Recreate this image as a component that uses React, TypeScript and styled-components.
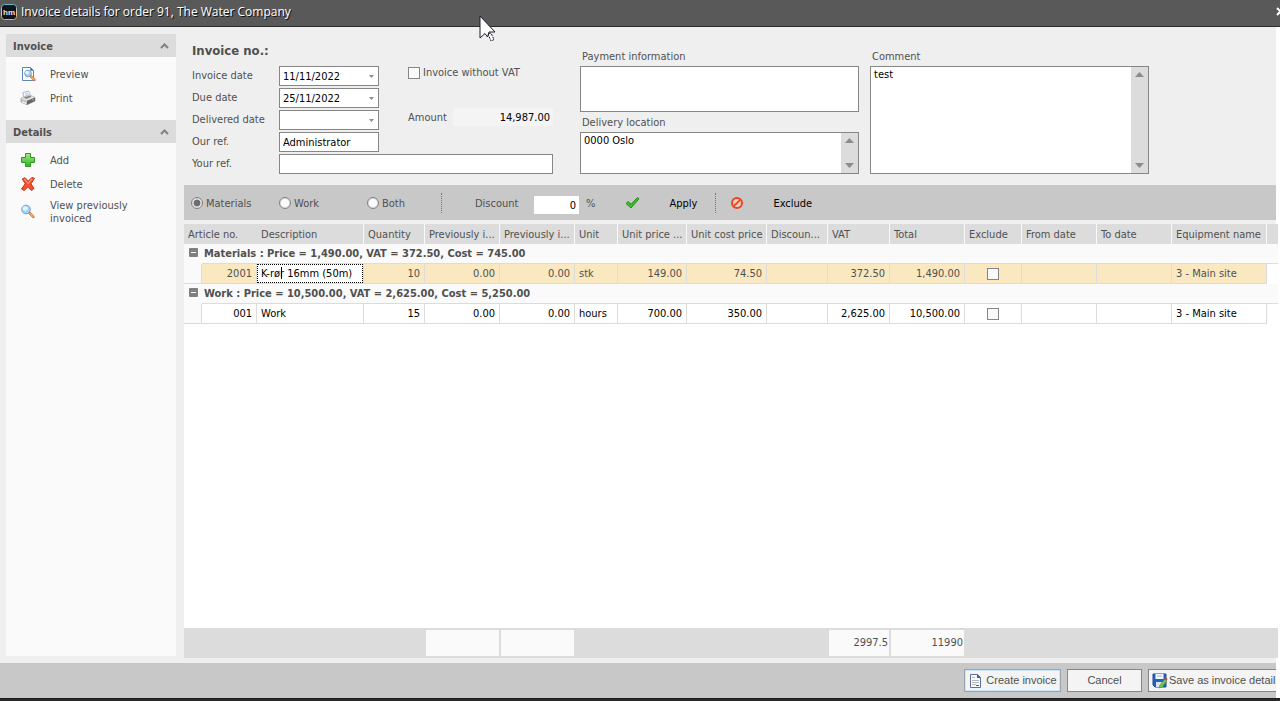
import React from "react";
import styled, { createGlobalStyle, css } from "styled-components";

const colors = {
  window: "#efefef",
  panel: "#fafafa",
  header: "#dcdcdc",
  bar: "#c8c8c8",
  line: "#dcdcdc",
  border: "#868686",
  text: "#505050",
  selected: "#fae8c0",
};

const GlobalStyle = createGlobalStyle`
  *, *::before, *::after { box-sizing: border-box; }
  body { margin: 0; background: #fff; }
  body, button, input, textarea, table {
    font-family: "DejaVu Sans Condensed", Tahoma, "Noto Sans", sans-serif;
    font-size: 11px;
    line-height: 13px;
    color: ${colors.text};
  }
  button { padding: 0; border: 0; background: none; cursor: pointer; }
  svg { display: block; flex: none; }
`;

const Window = styled.div`
  position: relative;
  display: flex;
  flex-direction: column;
  min-height: 100vh;
  overflow: hidden;
`;

const TitleBar = styled.header`
  display: flex;
  align-items: center;
  gap: 4px;
  height: 27px;
  padding: 0 0 2px 1px;
  background: #595959;
  border-bottom: 1px solid #2c2c2c;
`;

const Title = styled.h1`
  flex: 1;
  margin: 0;
  font-family: "Open Sans", "Noto Sans", sans-serif;
  font-size: 12px;
  line-height: 16px;
  font-weight: 400;
  color: #fff;
  text-shadow: 1px 1px 0 #111;
`;

const CloseButton = styled.button`
  width: 4px;
  height: 12px;
  overflow: hidden;
`;

const Workspace = styled.div`
  flex: 1;
  display: flex;
  gap: 8px;
  margin-right: 4px;
  padding-left: 6px;
  background: ${colors.window};
`;

const Sidebar = styled.aside`
  flex: none;
  width: 170px;
  margin: 7px 0;
  background: ${colors.panel};
`;

const SectionHeader = styled.button`
  display: flex;
  align-items: center;
  justify-content: space-between;
  width: 100%;
  height: 23px;
  padding: 1px 7px 0;
  background: ${colors.header};
  font-weight: 700;
`;

const SectionBody = styled.nav`
  padding: 5px 0 10px;
`;

const SideAction = styled.button`
  display: flex;
  align-items: center;
  gap: 14px;
  width: 100%;
  min-height: 24px;
  padding: 3px 40px 3px 14px;
  text-align: left;
`;

const Main = styled.main`
  flex: 1;
  min-width: 0;
  display: flex;
  flex-direction: column;
  padding-bottom: 5px;
`;

const Form = styled.form`
  display: flex;
  padding: 16px 0 11px 8px;
`;

const GeneralFields = styled.section`
  width: 361px;
  margin-right: 27px;
`;

const FormTitle = styled.h2`
  margin: 0 0 8px;
  font-size: 13px;
  line-height: 15px;
  font-weight: 700;
`;

const FieldGrid = styled.div`
  display: grid;
  grid-template-columns: 87px 100px 1fr;
  grid-auto-rows: 20px;
  row-gap: 2px;
`;

const FieldLabel = styled.label`
  grid-column: 1;
  line-height: 20px;
`;

const FieldBox = styled.div<{ $wide?: boolean }>`
  grid-column: ${(p) => (p.$wide ? "2 / 4" : "2")};
  display: flex;
  border: 1px solid ${colors.border};
  background: #fff;
`;

const FieldInput = styled.input`
  flex: 1;
  min-width: 0;
  padding: 0 3px;
  border: 0;
  outline: 0;
  background: transparent;
  color: #000;
`;

const DropButton = styled.button`
  display: grid;
  place-items: center;
  width: 14px;
`;

const Options = styled.div`
  grid-column: 3;
  grid-row: 1 / 5;
  display: flex;
  flex-direction: column;
  gap: 29px;
  padding-left: 29px;
`;

const CheckLabel = styled.label`
  display: flex;
  align-items: center;
  gap: 3px;
  white-space: nowrap;
`;

const CheckBox = styled.input`
  appearance: none;
  display: block;
  width: 12px;
  height: 12px;
  margin: 0;
  border: 1px solid ${colors.border};
  background: ${colors.panel};
  &:checked { background: ${colors.border}; }
`;

const AmountRow = styled.div`
  display: flex;
  align-items: center;
`;

const AmountLabel = styled.label`
  width: 45px;
`;

const Amount = styled.output`
  flex: 1;
  padding: 3px 3px 2px;
  background: #f4f4f4;
  color: #000;
  text-align: right;
`;

const NotesColumn = styled.section`
  width: 279px;
  margin-right: 11px;
  padding-top: 6px;
`;

const NoteLabel = styled.label`
  display: block;
  margin-bottom: 2px;
  padding-left: 2px;
  line-height: 15px;
`;

const NoteBox = styled.div<{ $height: number }>`
  display: flex;
  height: ${(p) => p.$height}px;
  border: 1px solid ${colors.border};
  background: #fff;
  & + label { margin-top: 3px; }
`;

const NoteText = styled.textarea`
  flex: 1;
  min-width: 0;
  padding: 1px 3px;
  border: 0;
  outline: 0;
  resize: none;
  overflow: hidden;
  color: #000;
`;

const ScrollBar = styled.div`
  display: flex;
  flex-direction: column;
  justify-content: space-between;
  align-items: center;
  width: 17px;
  padding: 5px 0;
  background: ${colors.header};
`;

const ToolBar = styled.div`
  display: flex;
  align-items: center;
  height: 35px;
  margin-bottom: 4px;
  padding: 1px 0 0 7px;
  background: ${colors.bar};
`;

const RadioGroup = styled.div`
  display: grid;
  grid-template-columns: 88px 88px 74px;
`;

const RadioLabel = styled.label`
  display: flex;
  align-items: center;
  gap: 3px;
`;

const Radio = styled.input`
  appearance: none;
  display: block;
  width: 12px;
  height: 12px;
  margin: 0;
  border: 1px solid #808080;
  border-radius: 50%;
  background: ${colors.panel};
  box-shadow: inset 0 0 0 1px #d8d8d8;
  &:checked { background: radial-gradient(circle, #6e6e6e 3px, #fafafa 4px); }
`;

const Separator = styled.div`
  height: 20px;
  border-left: 1px dotted #777;
`;

const DiscountLabel = styled.label`
  width: 59px;
  margin-left: 33px;
`;

const DiscountInput = styled.input`
  width: 45px;
  height: 18px;
  margin: 3px 7px 0 0;
  padding: 1px 3px 0;
  border: 0;
  background: #fff;
  color: #000;
  text-align: right;
`;

const ToolButton = styled.button`
  display: flex;
  align-items: center;
  gap: 29px;
  color: #000;
`;

const ApplyButton = styled(ToolButton)`
  width: 90px;
  margin-left: 30px;
`;

const ExcludeButton = styled(ToolButton)`
  margin-left: 14px;
`;

const Grid = styled.section`
  flex: 1;
  display: flex;
  flex-direction: column;
  justify-content: space-between;
  margin-right: -2px;
  background: #fff;
`;

const Table = styled.table`
  width: 100%;
  table-layout: fixed;
  border-collapse: separate;
  border-spacing: 0;
`;

const Column = styled.col<{ $width?: number }>`
  width: ${(p) => (p.$width ? `${p.$width}px` : "auto")};
`;

const HeadCell = styled.th<{ $joined?: boolean }>`
  height: 20px;
  padding: 0 0 0 4px;
  border-right: 1px solid ${(p) => (p.$joined ? colors.header : colors.panel)};
  background: ${colors.header};
  font-weight: 400;
  text-align: left;
  white-space: nowrap;
  overflow: hidden;
  &:last-child { border-right: 0; }
`;

const GroupToggleCell = styled.td`
  height: 20px;
  padding: 0 0 2px 5px;
  background: ${colors.panel};
`;

const GroupTitle = styled.td`
  height: 20px;
  padding: 0 3px 0 2px;
  border-bottom: 1px solid ${colors.line};
  background: ${colors.panel};
  font-weight: 700;
`;

const Cell = styled.td<{ $align?: string; $filler?: boolean; $flush?: boolean }>`
  height: 20px;
  padding: 0 4px;
  text-align: ${(p) => p.$align || "left"};
  white-space: nowrap;
  overflow: hidden;
  ${(p) => p.$flush && css`padding: 0;`}
  ${(p) =>
    !p.$filler &&
    css`
      border-right: 1px solid ${colors.line};
      border-bottom: 1px solid ${colors.line};
    `}
  & > input[type="checkbox"] { margin: 0 auto; }
`;

const DataRow = styled.tr<{ $selected?: boolean }>`
  color: ${(p) => (p.$selected ? colors.text : "#000")};
  & > td { background: ${(p) => (p.$selected ? colors.selected : "#fff")}; }
  & > td:first-child { background: ${colors.panel}; }
  & > td:last-child { background: #fff; }
`;

const EditorBox = styled.div`
  position: relative;
  display: flex;
  height: 19px;
`;

const CellEditor = styled.input`
  width: 100%;
  padding: 0 3px;
  border: 1px dotted #000;
  border-radius: 0;
  outline: 0;
  background: #fff;
  color: #000;
`;

const Caret = styled.span`
  position: absolute;
  left: 24px;
  top: 3px;
  width: 1px;
  height: 12px;
  background: #000;
`;

const Summary = styled.div`
  display: grid;
  grid-template-columns: 241px 75px 75px 253px 62px 75px;
  height: 30px;
  padding: 2px 0;
  background: ${colors.header};
`;

const SummaryCell = styled.output<{ $column: number }>`
  grid-column: ${(p) => p.$column};
  margin-left: 1px;
  padding-right: 1px;
  border-right: 1px solid ${colors.header};
  background: ${colors.panel};
  line-height: 26px;
  text-align: right;
`;

const Footer = styled.footer`
  display: flex;
  justify-content: flex-end;
  gap: 6px;
  height: 35px;
  margin-right: 4px;
  padding-top: 6px;
  background: ${colors.bar};
  overflow: hidden;
`;

const FooterButton = styled.button<{ $width: number; $primary?: boolean }>`
  flex: none;
  display: flex;
  align-items: center;
  justify-content: center;
  gap: 4px;
  width: ${(p) => p.$width}px;
  height: 23px;
  border: 1px solid ${(p) => (p.$primary ? "#98a4ae" : colors.border)};
  background: #f4f4f4;
  font-family: "Liberation Sans", Arial, sans-serif;
  white-space: nowrap;
  ${(p) => p.$primary && css`box-shadow: inset 0 0 0 1px #c9e6fa;`}
  &:last-child {
    justify-content: flex-start;
    gap: 1px;
    margin-right: -12px;
    padding-left: 3px;
  }
`;

const BottomEdge = styled.div`
  height: 3px;
  background: #2a2828;
  border-top: 1px solid #1c1c1c;
`;

const Pointer = styled.svg`
  position: absolute;
  left: 479px;
  top: 15px;
  pointer-events: none;
`;

const LogoIcon = () => (
  <svg width="16" height="16" viewBox="0 0 16 16">
    <defs>
      <linearGradient id="ring" x1="0" y1="0" x2="0" y2="1">
        <stop offset="0" stopColor="#6fb7bd" />
        <stop offset="0.5" stopColor="#d8c7b0" />
        <stop offset="1" stopColor="#efb13a" />
      </linearGradient>
    </defs>
    <rect x="0.5" y="0.5" width="15" height="15" rx="3" fill="#10131d" stroke="url(#ring)" />
    <text x="8" y="11" textAnchor="middle" fontSize="8" fontWeight="700" fontFamily="Liberation Sans, sans-serif" fill="#e8e8e8">hm</text>
  </svg>
);

const CloseIcon = () => (
  <svg width="10" height="10" viewBox="0 0 10 10">
    <path d="M1 1L8 8M8 1L1 8" stroke="#fff" strokeWidth="2" />
  </svg>
);

const ChevronIcon = () => (
  <svg width="9" height="6" viewBox="0 0 9 6">
    <path d="M1 5L4.500 1.500L8 5" fill="none" stroke="#808080" strokeWidth="2" />
  </svg>
);

const LensShape = ({ x, y, r }: { x: number; y: number; r: number }) => (
  <g>
    <path d={`M${x + r * 0.8} ${y + r * 0.8}L${x + r + 3} ${y + r + 3}`} stroke="#c96a2c" strokeWidth="2.600" strokeLinecap="round" />
    <path d={`M${x + r * 0.9} ${y + r * 0.9}L${x + r + 2.6} ${y + r + 2.6}`} stroke="#f3b06c" strokeWidth="1.400" strokeLinecap="round" />
    <circle cx={x} cy={y} r={r} fill="#9fd6f5" stroke="#7d9cc0" strokeWidth="1" />
    <ellipse cx={x - 0.8} cy={y - 1} rx={r * 0.6} ry={r * 0.5} fill="#e2f5ff" />
  </g>
);

const PreviewIcon = () => (
  <svg width="16" height="16" viewBox="0 0 16 16">
    <path d="M2.500 1.500h8l3 3v10h-11z" fill="#fbfdff" stroke="#5f86bb" />
    <path d="M10.500 1.500v3h3z" fill="#3c64a0" stroke="#5f86bb" strokeWidth="0.600" />
    <LensShape x={8} y={7.5} r={3.3} />
  </svg>
);

const PrintIcon = () => (
  <svg width="16" height="16" viewBox="0 0 16 16">
    <path d="M3.500 7L3 2.500L8.500 1L11 6z" fill="#f4f8ff" stroke="#9aa9bd" strokeWidth="0.800" />
    <path d="M5 4l3-.8M5.300 5.600l3.300-.9" stroke="#a8bcd8" strokeWidth="0.800" />
    <path d="M1 8.200L10 5.200L15 7.400V11L7 14.800L1 12z" fill="#c4c4c4" stroke="#999" strokeWidth="0.700" />
    <path d="M1 8.200L10 5.200L15 7.400L7 10.700z" fill="#e6e6e6" />
    <path d="M3.800 7.600L9.600 5.700L11.800 6.800L6.200 8.900z" fill="#858585" />
    <path d="M7 10.700L15 7.400V11L7 14.800z" fill="#666" />
    <path d="M2 11.200l4 1.900v1L2 12.300z" fill="#fff" />
    <circle cx="13" cy="9.600" r="0.900" fill="#5bd34a" />
  </svg>
);

const AddIcon = () => (
  <svg width="16" height="16" viewBox="0 0 16 16">
    <defs>
      <linearGradient id="plus" x1="0" y1="0" x2="0" y2="1">
        <stop offset="0" stopColor="#a5ec83" />
        <stop offset="1" stopColor="#2fae24" />
      </linearGradient>
    </defs>
    <path d="M5.500 1.500h5V5.500h4v5h-4V14.500h-5v-4H1.500V5.500H5.500z" fill="url(#plus)" stroke="#2e9a26" />
  </svg>
);

const DeleteIcon = () => (
  <svg width="16" height="16" viewBox="0 0 16 16">
    <path d="M2.300 3L5 1.700L8.300 5L12 1.500L14.500 2.300L11 7.800L14 12.500L11.500 14.500L7.800 11L4.200 14.500L1.500 13L5.200 7.800z" fill="#f4512f" stroke="#c3331d" strokeLinejoin="round" />
    <path d="M4.200 3L8.200 7.300L12.300 2.700" fill="none" stroke="#ff9478" strokeWidth="1.200" />
  </svg>
);

const SearchIcon = () => (
  <svg width="16" height="16" viewBox="0 0 16 16">
    <LensShape x={6} y={5.5} r={4.3} />
  </svg>
);

const CheckIcon = () => (
  <svg width="15" height="14" viewBox="0 0 15 14">
    <path d="M1 7.500L3.200 5.500L6 8.200L12.500 1.500L14 2.800L6 12z" fill="#3fba2c" stroke="#23911b" strokeLinejoin="round" />
  </svg>
);

const BanIcon = () => (
  <svg width="14" height="14" viewBox="0 0 14 14">
    <circle cx="7" cy="7" r="5" fill="#e6d0cb" stroke="#f0431c" strokeWidth="2" />
    <path d="M10.200 3.800L3.800 10.200" stroke="#f0431c" strokeWidth="1.800" />
  </svg>
);

const InvoiceIcon = () => (
  <svg width="14" height="16" viewBox="0 0 14 16">
    <path d="M2.500 1.500h7l3 3v10h-10z" fill="#f7f9fc" stroke="#5f6f9f" />
    <path d="M9 1v4h4z" fill="#4a5f9a" />
    <path d="M4 4.500h3M4 7.500h7M4 9.500h7M4 11.500h4" stroke="#b4b8c0" />
    <path d="M8 12.500h3" stroke="#e02020" />
  </svg>
);

const SaveIcon = () => (
  <svg width="16" height="16" viewBox="0 0 16 16">
    <path d="M1 1h13v13H3l-2-2z" fill="#2862b8" stroke="#1c4a94" />
    <rect x="3.500" y="1" width="8" height="5" fill="#f2f6fc" />
    <path d="M5 3h5" stroke="#9bb4dc" />
    <rect x="4" y="9" width="7" height="5" fill="#d8e2f0" />
    <path d="M7 15l1-3L13 6l2 2l-5 6z" fill="#6cc950" stroke="#3c9430" strokeWidth="0.600" />
    <path d="M12.500 5.500L13.500 4L15.500 6L14.800 7.600z" fill="#d93a2b" />
  </svg>
);

const CollapseIcon = () => (
  <svg width="9" height="9" viewBox="0 0 9 9">
    <rect width="9" height="9" rx="1" fill="#808080" />
    <path d="M2 4.500h5" stroke="#fff" />
  </svg>
);

const Arrow = ({ up, small }: { up?: boolean; small?: boolean }) => {
  const w = small ? 5 : 9;
  const h = small ? 3 : 5;
  return (
    <svg width={w} height={h} viewBox="0 0 9 5">
      <path d={up ? "M0 5L4.500 0L9 5z" : "M0 0H9L4.500 5z"} fill="#8c8c8c" />
    </svg>
  );
};

const sections = [
  {
    title: "Invoice",
    items: [
      { label: "Preview", icon: <PreviewIcon /> },
      { label: "Print", icon: <PrintIcon /> },
    ],
  },
  {
    title: "Details",
    items: [
      { label: "Add", icon: <AddIcon /> },
      { label: "Delete", icon: <DeleteIcon /> },
      { label: "View previously invoiced", icon: <SearchIcon /> },
    ],
  },
];

const fields = [
  { id: "invoiceDate", label: "Invoice date", value: "11/11/2022", drop: true },
  { id: "dueDate", label: "Due date", value: "25/11/2022", drop: true },
  { id: "deliveredDate", label: "Delivered date", value: "", drop: true },
  { id: "ourRef", label: "Our ref.", value: "Administrator" },
  { id: "yourRef", label: "Your ref.", value: "", wide: true },
];

const columns: { title: string; width?: number; align?: string }[] = [
  { title: "Article no.", width: 55, align: "right" },
  { title: "Description", width: 107 },
  { title: "Quantity", width: 61, align: "right" },
  { title: "Previously i...", width: 75, align: "right" },
  { title: "Previously i...", width: 75, align: "right" },
  { title: "Unit", width: 43 },
  { title: "Unit price ...", width: 69, align: "right" },
  { title: "Unit cost price", width: 80, align: "right" },
  { title: "Discoun...", width: 61, align: "right" },
  { title: "VAT", width: 62, align: "right" },
  { title: "Total", width: 75, align: "right" },
  { title: "Exclude", width: 57, align: "center" },
  { title: "From date", width: 75 },
  { title: "To date", width: 75 },
  { title: "Equipment name", width: 95 },
];

const EXCLUDE = 11;

const groups = [
  {
    title: "Materials : Price = 1,490.00, VAT = 372.50, Cost = 745.00",
    selected: true,
    cells: ["2001", "K-rør 16mm (50m)", "10", "0.00", "0.00", "stk", "149.00", "74.50", "", "372.50", "1,490.00", "", "", "", "3 - Main site"],
  },
  {
    title: "Work : Price = 10,500.00, VAT = 2,625.00, Cost = 5,250.00",
    selected: false,
    cells: ["001", "Work", "15", "0.00", "0.00", "hours", "700.00", "350.00", "", "2,625.00", "10,500.00", "", "", "", "3 - Main site"],
  },
];

const Note = ({ id, label, value, height, scroll }: { id: string; label: string; value: string; height: number; scroll?: boolean }) => (
  <>
    <NoteLabel htmlFor={id}>{label}</NoteLabel>
    <NoteBox $height={height}>
      <NoteText id={id} defaultValue={value} />
      {scroll && (
        <ScrollBar aria-hidden="true">
          <Arrow up />
          <Arrow />
        </ScrollBar>
      )}
    </NoteBox>
  </>
);

export default function App() {
  return (
    <Window>
      <GlobalStyle />
      <TitleBar>
        <LogoIcon />
        <Title>Invoice details for order 91, The Water Company</Title>
        <CloseButton aria-label="Close">
          <CloseIcon />
        </CloseButton>
      </TitleBar>

      <Workspace>
        <Sidebar>
          {sections.map((section) => (
            <React.Fragment key={section.title}>
              <SectionHeader>
                {section.title}
                <ChevronIcon />
              </SectionHeader>
              <SectionBody>
                {section.items.map((item) => (
                  <SideAction key={item.label}>
                    {item.icon}
                    <span>{item.label}</span>
                  </SideAction>
                ))}
              </SectionBody>
            </React.Fragment>
          ))}
        </Sidebar>

        <Main>
          <Form>
            <GeneralFields>
              <FormTitle>Invoice no.:</FormTitle>
              <FieldGrid>
                {fields.map((field) => (
                  <React.Fragment key={field.id}>
                    <FieldLabel htmlFor={field.id}>{field.label}</FieldLabel>
                    <FieldBox $wide={field.wide}>
                      <FieldInput id={field.id} defaultValue={field.value} />
                      {field.drop && (
                        <DropButton type="button" aria-label={`Choose ${field.label}`}>
                          <Arrow small />
                        </DropButton>
                      )}
                    </FieldBox>
                  </React.Fragment>
                ))}
                <Options>
                  <CheckLabel>
                    <CheckBox type="checkbox" />
                    Invoice without VAT
                  </CheckLabel>
                  <AmountRow>
                    <AmountLabel htmlFor="amount">Amount</AmountLabel>
                    <Amount id="amount">14,987.00</Amount>
                  </AmountRow>
                </Options>
              </FieldGrid>
            </GeneralFields>
            <NotesColumn>
              <Note id="payment" label="Payment information" value="" height={46} />
              <Note id="delivery" label="Delivery location" value="0000 Oslo" height={42} scroll />
            </NotesColumn>
            <NotesColumn>
              <Note id="comment" label="Comment" value="test" height={108} scroll />
            </NotesColumn>
          </Form>

          <ToolBar>
            <RadioGroup>
              {["Materials", "Work", "Both"].map((name, i) => (
                <RadioLabel key={name}>
                  <Radio type="radio" name="scope" defaultChecked={i === 0} />
                  {name}
                </RadioLabel>
              ))}
            </RadioGroup>
            <Separator />
            <DiscountLabel htmlFor="discount">Discount</DiscountLabel>
            <DiscountInput id="discount" defaultValue="0" />
            <span>%</span>
            <ApplyButton>
              <CheckIcon />
              Apply
            </ApplyButton>
            <Separator />
            <ExcludeButton>
              <BanIcon />
              Exclude
            </ExcludeButton>
          </ToolBar>

          <Grid>
            <Table>
              <colgroup>
                <Column $width={18} />
                {columns.map((c, i) => (
                  <Column key={i} $width={c.width} />
                ))}
                <Column />
              </colgroup>
              <thead>
                <tr>
                  {columns.map((c, i) => (
                    <HeadCell key={i} colSpan={i === 0 ? 2 : 1} $joined={i === 0}>
                      {c.title}
                    </HeadCell>
                  ))}
                  <HeadCell />
                </tr>
              </thead>
              <tbody>
                {groups.map((group) => (
                  <React.Fragment key={group.title}>
                    <tr>
                      <GroupToggleCell>
                        <button aria-label="Collapse group">
                          <CollapseIcon />
                        </button>
                      </GroupToggleCell>
                      <GroupTitle colSpan={columns.length + 1}>{group.title}</GroupTitle>
                    </tr>
                    <DataRow $selected={group.selected}>
                      <Cell />
                      {group.cells.map((value, i) => {
                        const editing = group.selected && i === 1;
                        return (
                          <Cell key={i} $align={columns[i].align} $flush={editing}>
                            {editing ? (
                              <EditorBox>
                                <CellEditor aria-label="Description" defaultValue={value} />
                                <Caret />
                              </EditorBox>
                            ) : i === EXCLUDE ? (
                              <CheckBox type="checkbox" aria-label="Exclude line" />
                            ) : (
                              value
                            )}
                          </Cell>
                        );
                      })}
                      <Cell $filler />
                    </DataRow>
                  </React.Fragment>
                ))}
              </tbody>
            </Table>
            <Summary>
              <SummaryCell $column={2} />
              <SummaryCell $column={3} />
              <SummaryCell $column={5}>2997.5</SummaryCell>
              <SummaryCell $column={6}>11990</SummaryCell>
            </Summary>
          </Grid>
        </Main>
      </Workspace>

      <Footer>
        <FooterButton $width={97} $primary>
          <InvoiceIcon />
          Create invoice
        </FooterButton>
        <FooterButton $width={75}>Cancel</FooterButton>
        <FooterButton $width={140}>
          <SaveIcon />
          Save as invoice details
        </FooterButton>
      </Footer>
      <BottomEdge />

      <Pointer width="20" height="30" viewBox="0 0 20 30" aria-hidden="true">
        <path d="M9 19L12 26L15 24.500L12 18z" fill="#fff" stroke="#1c1c28" strokeDasharray="2 1" />
        <path d="M1 1V23L6 18.500L8.500 22L10 17H16z" fill="#fff" stroke="#1c1c28" />
      </Pointer>
    </Window>
  );
}
